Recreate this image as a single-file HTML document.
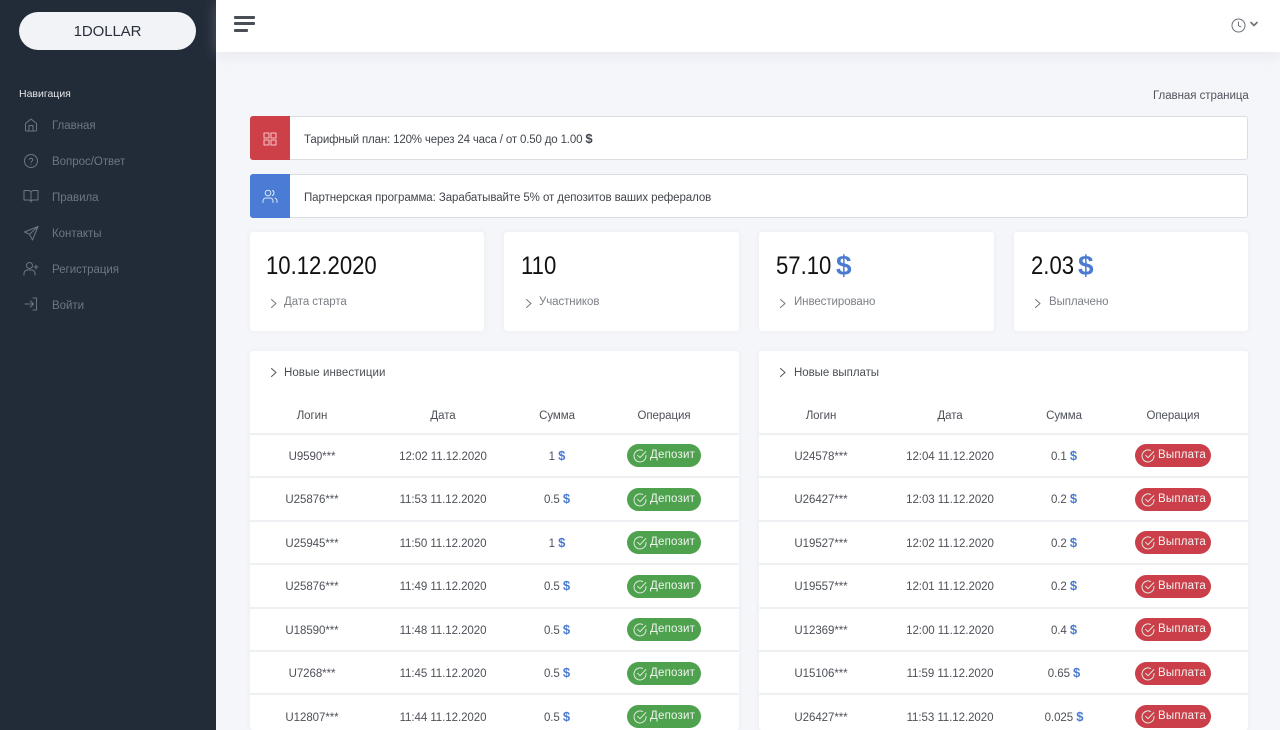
<!DOCTYPE html>
<html lang="ru"><head><meta charset="utf-8"><title>1DOLLAR</title>
<style>
html,body{margin:0;padding:0;width:1280px;height:730px;overflow:hidden;background:#f5f6fa;font-family:"Liberation Sans",sans-serif;color:#4a4e55}
*{box-sizing:border-box}
.a{position:absolute;white-space:nowrap;line-height:14px;margin-top:1px}
.c{position:absolute;white-space:nowrap;line-height:14px;margin-top:1px;transform:translateX(-50%);font-size:11.5px;color:#4d5158;letter-spacing:-.06px}
.c .usd{font-size:13px;line-height:12px}
svg{position:absolute;fill:none;stroke:currentColor;stroke-width:1;stroke-linecap:round;stroke-linejoin:round}
#side{position:absolute;left:0;top:0;width:216px;height:730px;background:#222b38}
#top{position:absolute;left:216px;top:0;width:1064px;height:52px;background:#fff;box-shadow:0 2px 14px rgba(190,195,210,.3)}
.nav{position:absolute;left:52px;margin-top:1px;font-size:11.5px;color:#6f7681;letter-spacing:-.02px;line-height:14px;white-space:nowrap}
.nsvg{color:#6f7681;width:16px;height:16px;left:23px}
.alert{position:absolute;left:250px;width:998px;height:44px;background:#fff;border:1px solid #dcdde3;border-radius:3px}
.box{position:absolute;left:250px;width:40px;height:44px;border-radius:3px 0 0 3px}
.card{position:absolute;background:#fff;border-radius:3px;box-shadow:0 0 6px rgba(220,222,232,.35)}
.big{position:absolute;top:252px;font-size:25px;color:#111;line-height:28px;white-space:nowrap;transform:scaleX(.885);transform-origin:0 50%}
.dl{position:absolute;top:252px;font-size:28px;font-weight:bold;color:#4b7bd0;line-height:28px}
.lbl{position:absolute;top:295px;font-size:11.5px;color:#7b7f86;letter-spacing:-.08px;line-height:14px;white-space:nowrap}
.usd{font-weight:bold;color:#4b7bd0}
.sep{position:absolute;height:2px;background:#eff0f4;width:489px}
.pill{position:absolute;height:23px;border-radius:12px;color:#f1f4f1;font-size:11.5px;line-height:23px;white-space:nowrap}
.g{background:#4ea24e;width:74px;left:627px}
.r{background:#cb3f4a;width:76px;left:1135px}
.pill span{position:absolute;left:23px;top:0;letter-spacing:.2px}
.pill svg{left:6px;top:5px;width:14px;height:14px;color:#dfe9df}
.chev{color:#555;width:8px;height:10px}
</style></head><body>
<svg width="0" height="0" style="position:absolute"><defs>
<symbol id="chk" viewBox="0 0 14 14"><path d="M13 6.500v.5a6 6 0 1 1-3.500-5.500"/><path d="M4.600 6.300 7 8.700 12.800 2.600"/></symbol>
<symbol id="chv" viewBox="0 0 8 10"><path d="M1.500 1.500 6 5.500 1.500 9.500"/></symbol>
</defs></svg>

<div id="side">
<div style="position:absolute;left:19px;top:12px;width:177px;height:38px;border-radius:19px;background:#f2f3f6;color:#2a313c;font-size:15px;text-align:center;line-height:40px;letter-spacing:-.1px">1DOLLAR</div>
<div class="a" style="left:19px;top:86px;font-size:10.5px;color:#e3e5e8">Навигация</div>
<svg class="nsvg" style="top:117px" viewBox="0 0 16 16"><path d="M2.500 6.500 8 2l5.500 4.500V13a1 1 0 0 1-1 1h-9a1 1 0 0 1-1-1z"/><path d="M6 14V8.500h4V14"/></svg>
<div class="nav" style="top:118px">Главная</div>
<svg class="nsvg" style="top:153px" viewBox="0 0 16 16"><circle cx="8" cy="8" r="6.500"/><path d="M6.200 6.300a1.900 1.900 0 0 1 3.600.6c0 1.200-1.800 1.600-1.800 2.300"/><path d="M8 11.300h.01"/></svg>
<div class="nav" style="top:154px">Вопрос/Ответ</div>
<svg class="nsvg" style="top:188px" viewBox="0 0 16 16"><path d="M1 2.500h4.500A2.500 2.500 0 0 1 8 5v9a2 2 0 0 0-2-2H1z"/><path d="M15 2.500h-4.500A2.500 2.500 0 0 0 8 5v9a2 2 0 0 1 2-2h5z"/></svg>
<div class="nav" style="top:190px">Правила</div>
<svg class="nsvg" style="top:225px" viewBox="0 0 16 16"><path d="M15 1.500 1.500 7 6.500 9.300 9.500 15z"/><path d="M15 1.500 6.500 9.300"/></svg>
<div class="nav" style="top:226px">Контакты</div>
<svg class="nsvg" style="top:261px" viewBox="0 0 16 16"><circle cx="6.500" cy="4.500" r="3"/><path d="M1 14v-1.500A3.500 3.500 0 0 1 4.500 9h4a3.500 3.500 0 0 1 3.500 3.500V14"/><path d="M13 4v4M11 6h4"/></svg>
<div class="nav" style="top:262px">Регистрация</div>
<svg class="nsvg" style="top:296px" viewBox="0 0 16 16"><path d="M10 2h3.500v12H10"/><path d="M7.500 5 10.500 8 7.500 11"/><path d="M2 8h8.500"/></svg>
<div class="nav" style="top:298px">Войти</div>
</div>

<div id="top"></div>
<div style="position:absolute;left:234px;top:16px;width:21px;height:3px;background:#494e57;border-radius:1px"></div>
<div style="position:absolute;left:234px;top:22px;width:21px;height:3px;background:#494e57;border-radius:1px"></div>
<div style="position:absolute;left:234px;top:29px;width:14px;height:3px;background:#494e57;border-radius:1px"></div>
<svg style="left:1231px;top:18px;width:15px;height:15px;color:#6c7077" viewBox="0 0 15 15"><circle cx="7.500" cy="7.500" r="6.500"/><path d="M7.500 4v3.800l2.300 1"/></svg>
<svg style="left:1250px;top:21px;width:8px;height:6px;color:#6c7077;stroke-width:1.600" viewBox="0 0 8 6"><path d="M1 1.500 4 4.500 7 1.500"/></svg>

<div class="a" style="left:1153px;top:88px;font-size:11.500px;color:#50545b;letter-spacing:-.05px">Главная страница</div>

<div class="alert" style="top:116px"></div>
<div class="box" style="top:116px;background:#cd4048"></div>
<svg style="left:263px;top:132px;width:14px;height:14px;color:#f3c4c7" viewBox="0 0 14 14"><rect x="1" y="1" width="5" height="5"/><rect x="8" y="1" width="5" height="5"/><rect x="1" y="8" width="5" height="5"/><rect x="8" y="8" width="5" height="5"/></svg>
<div class="a" style="left:304px;top:132px;font-size:11.500px;color:#42464d;letter-spacing:-.16px">Тарифный план: 120% через 24 часа / от 0.50 до 1.00 <b style="font-size:13px;line-height:12px">$</b></div>

<div class="alert" style="top:174px"></div>
<div class="box" style="top:174px;background:#4a7cd6"></div>
<svg style="left:262px;top:189px;width:16px;height:15px;color:#dbe6f8" viewBox="0 0 16 15"><circle cx="6" cy="4" r="2.800"/><path d="M1 13.500V12a3 3 0 0 1 3-3h4a3 3 0 0 1 3 3v1.500"/><path d="M10.500 1.500a2.800 2.800 0 0 1 0 5"/><path d="M15 13.500V12a3 3 0 0 0-2-2.800"/></svg>
<div class="a" style="left:304px;top:190px;font-size:11.500px;color:#42464d;letter-spacing:-.08px">Партнерская программа: Зарабатывайте 5% от депозитов ваших рефералов</div>

<div class="card" style="left:250px;top:232px;width:234px;height:99px"></div>
<div class="card" style="left:504px;top:232px;width:235px;height:99px"></div>
<div class="card" style="left:759px;top:232px;width:235px;height:99px"></div>
<div class="card" style="left:1014px;top:232px;width:234px;height:99px"></div>
<div class="big" style="left:266px">10.12.2020</div>
<div class="big" style="left:521px">110</div>
<div class="big" style="left:776px">57.10</div><div class="dl" style="left:836px">$</div>
<div class="big" style="left:1031px">2.03</div><div class="dl" style="left:1078px">$</div>
<svg class="chev" style="left:270px;top:298px;color:#777" ><use href="#chv"/></svg><div class="lbl" style="left:284px">Дата старта</div>
<svg class="chev" style="left:525px;top:298px;color:#777"><use href="#chv"/></svg><div class="lbl" style="left:539px">Участников</div>
<svg class="chev" style="left:779px;top:298px;color:#777"><use href="#chv"/></svg><div class="lbl" style="left:794px">Инвестировано</div>
<svg class="chev" style="left:1034px;top:298px;color:#777"><use href="#chv"/></svg><div class="lbl" style="left:1049px">Выплачено</div>

<div class="card" style="left:250px;top:351px;width:489px;height:379px"></div>
<div class="card" style="left:759px;top:351px;width:489px;height:379px"></div>
<svg class="chev" style="left:270px;top:367px"><use href="#chv"/></svg>
<div class="a" style="left:284px;top:365px;font-size:11.500px;color:#4a4e55;letter-spacing:.05px">Новые инвестиции</div>
<svg class="chev" style="left:779px;top:367px"><use href="#chv"/></svg>
<div class="a" style="left:794px;top:365px;font-size:11.500px;color:#4a4e55;letter-spacing:-.05px">Новые выплаты</div>

<div class="c" style="left:312px;top:408px">Логин</div><div class="c" style="left:443px;top:408px">Дата</div><div class="c" style="left:557px;top:408px">Сумма</div><div class="c" style="left:664px;top:408px">Операция</div>
<div class="c" style="left:821px;top:408px">Логин</div><div class="c" style="left:950px;top:408px">Дата</div><div class="c" style="left:1064px;top:408px">Сумма</div><div class="c" style="left:1173px;top:408px">Операция</div>

<div class="sep" style="left:250px;top:433px"></div><div class="sep" style="left:250px;top:476px"></div><div class="sep" style="left:250px;top:520px"></div><div class="sep" style="left:250px;top:563px"></div><div class="sep" style="left:250px;top:607px"></div><div class="sep" style="left:250px;top:650px"></div><div class="sep" style="left:250px;top:693px"></div>
<div class="sep" style="left:759px;top:433px"></div><div class="sep" style="left:759px;top:476px"></div><div class="sep" style="left:759px;top:520px"></div><div class="sep" style="left:759px;top:563px"></div><div class="sep" style="left:759px;top:607px"></div><div class="sep" style="left:759px;top:650px"></div><div class="sep" style="left:759px;top:693px"></div>

<div class="c" style="left:312px;top:449px">U9590***</div><div class="c" style="left:443px;top:449px">12:02 11.12.2020</div><div class="c" style="left:557px;top:449px">1 <span class="usd">$</span></div><div class="pill g" style="top:444px"><svg><use href="#chk"/></svg><span>Депозит</span></div>
<div class="c" style="left:312px;top:492px">U25876***</div><div class="c" style="left:443px;top:492px">11:53 11.12.2020</div><div class="c" style="left:557px;top:492px">0.5 <span class="usd">$</span></div><div class="pill g" style="top:488px"><svg><use href="#chk"/></svg><span>Депозит</span></div>
<div class="c" style="left:312px;top:536px">U25945***</div><div class="c" style="left:443px;top:536px">11:50 11.12.2020</div><div class="c" style="left:557px;top:536px">1 <span class="usd">$</span></div><div class="pill g" style="top:531px"><svg><use href="#chk"/></svg><span>Депозит</span></div>
<div class="c" style="left:312px;top:579px">U25876***</div><div class="c" style="left:443px;top:579px">11:49 11.12.2020</div><div class="c" style="left:557px;top:579px">0.5 <span class="usd">$</span></div><div class="pill g" style="top:575px"><svg><use href="#chk"/></svg><span>Депозит</span></div>
<div class="c" style="left:312px;top:623px">U18590***</div><div class="c" style="left:443px;top:623px">11:48 11.12.2020</div><div class="c" style="left:557px;top:623px">0.5 <span class="usd">$</span></div><div class="pill g" style="top:618px"><svg><use href="#chk"/></svg><span>Депозит</span></div>
<div class="c" style="left:312px;top:666px">U7268***</div><div class="c" style="left:443px;top:666px">11:45 11.12.2020</div><div class="c" style="left:557px;top:666px">0.5 <span class="usd">$</span></div><div class="pill g" style="top:662px"><svg><use href="#chk"/></svg><span>Депозит</span></div>
<div class="c" style="left:312px;top:710px">U12807***</div><div class="c" style="left:443px;top:710px">11:44 11.12.2020</div><div class="c" style="left:557px;top:710px">0.5 <span class="usd">$</span></div><div class="pill g" style="top:705px"><svg><use href="#chk"/></svg><span>Депозит</span></div>

<div class="c" style="left:821px;top:449px">U24578***</div><div class="c" style="left:950px;top:449px">12:04 11.12.2020</div><div class="c" style="left:1064px;top:449px">0.1 <span class="usd">$</span></div><div class="pill r" style="top:444px"><svg><use href="#chk"/></svg><span>Выплата</span></div>
<div class="c" style="left:821px;top:492px">U26427***</div><div class="c" style="left:950px;top:492px">12:03 11.12.2020</div><div class="c" style="left:1064px;top:492px">0.2 <span class="usd">$</span></div><div class="pill r" style="top:488px"><svg><use href="#chk"/></svg><span>Выплата</span></div>
<div class="c" style="left:821px;top:536px">U19527***</div><div class="c" style="left:950px;top:536px">12:02 11.12.2020</div><div class="c" style="left:1064px;top:536px">0.2 <span class="usd">$</span></div><div class="pill r" style="top:531px"><svg><use href="#chk"/></svg><span>Выплата</span></div>
<div class="c" style="left:821px;top:579px">U19557***</div><div class="c" style="left:950px;top:579px">12:01 11.12.2020</div><div class="c" style="left:1064px;top:579px">0.2 <span class="usd">$</span></div><div class="pill r" style="top:575px"><svg><use href="#chk"/></svg><span>Выплата</span></div>
<div class="c" style="left:821px;top:623px">U12369***</div><div class="c" style="left:950px;top:623px">12:00 11.12.2020</div><div class="c" style="left:1064px;top:623px">0.4 <span class="usd">$</span></div><div class="pill r" style="top:618px"><svg><use href="#chk"/></svg><span>Выплата</span></div>
<div class="c" style="left:821px;top:666px">U15106***</div><div class="c" style="left:950px;top:666px">11:59 11.12.2020</div><div class="c" style="left:1064px;top:666px">0.65 <span class="usd">$</span></div><div class="pill r" style="top:662px"><svg><use href="#chk"/></svg><span>Выплата</span></div>
<div class="c" style="left:821px;top:710px">U26427***</div><div class="c" style="left:950px;top:710px">11:53 11.12.2020</div><div class="c" style="left:1064px;top:710px">0.025 <span class="usd">$</span></div><div class="pill r" style="top:705px"><svg><use href="#chk"/></svg><span>Выплата</span></div>
</body></html>
